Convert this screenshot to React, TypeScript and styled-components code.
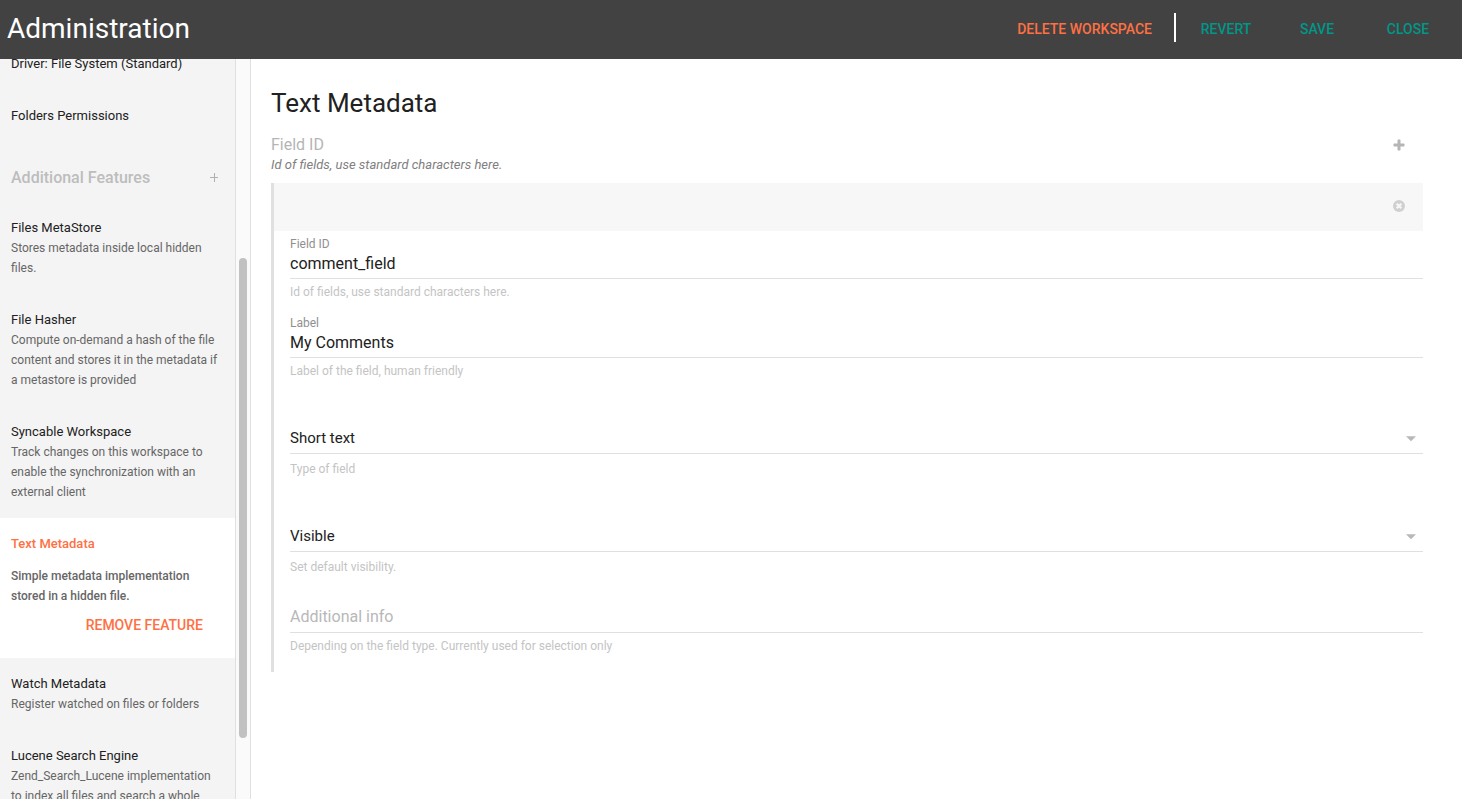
import React, { useId, useState } from "react";
import styled, { createGlobalStyle } from "styled-components";

const GlobalStyle = createGlobalStyle`
  * { box-sizing: border-box; }
  body {
    margin: 0;
    background: #fff;
    color: #212121;
    font-family: Roboto, "Liberation Sans", sans-serif;
  }
  h1, h2, h3, p, ul { margin: 0; padding: 0; font-weight: 400; }
  button, input, select { font-family: inherit; }
`;

const Page = styled.div`
  display: flex;
  flex-direction: column;
  height: 100vh;
  overflow: hidden;
`;

const TopBar = styled.header`
  position: relative;
  z-index: 1;
  display: flex;
  flex: none;
  align-items: center;
  justify-content: space-between;
  height: 59px;
  padding: 0 10px 4px 7px;
  background: #424242;
`;

const AppTitle = styled.h1`
  padding-top: 3px;
  color: #fff;
  font-size: 28px;
  line-height: 40px;
`;

const Actions = styled.div`
  display: flex;
  align-items: center;
`;

const FlatButton = styled.button<{ $accent?: boolean }>`
  min-width: 88px;
  height: 36px;
  padding: 2px 16px 0;
  border: 0;
  background: transparent;
  color: ${(p) => (p.$accent ? "#ff7043" : "#009688")};
  font-size: 14px;
  font-weight: 500;
  text-transform: uppercase;
  white-space: nowrap;
  cursor: pointer;
`;

const BarButton = styled(FlatButton)`
  margin-left: 3px;
`;

const Divider = styled.span`
  width: 2px;
  height: 29px;
  margin: 0 3px 0 6px;
  background: #fff;
`;

const Body = styled.div`
  display: flex;
  flex: 1;
  min-height: 0;
`;

const Sidebar = styled.aside`
  display: flex;
  flex: none;
  width: 251px;
  overflow: hidden;
  background: #f4f4f4;
`;

const ItemList = styled.ul`
  flex: 1;
  margin-top: -21px;
  list-style: none;
`;

const Item = styled.li<{ $selected?: boolean }>`
  padding: 16px 16px 16px 11px;
  background: ${(p) => (p.$selected ? "#fff" : "transparent")};
`;

const ItemTitle = styled.h3<{ $selected?: boolean }>`
  margin-bottom: ${(p) => (p.$selected ? "12px" : "0")};
  color: ${(p) => (p.$selected ? "#ff7043" : "#212121")};
  font-size: 13px;
  font-weight: ${(p) => (p.$selected ? 500 : 400)};
  line-height: 20px;
`;

const ItemText = styled.p<{ $selected?: boolean }>`
  color: #666;
  font-size: 12px;
  font-weight: ${(p) => (p.$selected ? 500 : 400)};
  line-height: 20px;
`;

const ItemActions = styled.div`
  display: flex;
  justify-content: flex-end;
`;

const SectionHead = styled.li`
  display: flex;
  align-items: center;
  justify-content: space-between;
  padding: 26px 16px 14px 11px;
`;

const SectionTitle = styled.h2`
  color: #bdbdbd;
  font-size: 16px;
  font-weight: 500;
  line-height: 20px;
`;

const IconButton = styled.button`
  display: flex;
  padding: 0;
  border: 0;
  background: transparent;
  cursor: pointer;
`;

const Track = styled.div`
  display: grid;
  grid-template-rows: 199fr 480fr 61fr;
  flex: none;
  width: 16px;
  padding: 0 3px;
  border: solid #e0e0e0;
  border-width: 0 1px 0 1px;
  background: #fafafa;
`;

const Thumb = styled.div`
  grid-row: 2;
  width: 8px;
  border-radius: 4px;
  background: #c1c1c1;
`;

const Main = styled.main`
  flex: 1;
  min-width: 0;
  padding: 26px 39px 20px 20px;
`;

const PaneTitle = styled.h2`
  font-size: 26px;
  line-height: 36px;
`;

const GroupHead = styled.div`
  display: flex;
  align-items: flex-start;
  justify-content: space-between;
  padding: 14px 18px 8px 0;
`;

const GroupName = styled.h3`
  color: #b5b5b5;
  font-size: 16px;
  line-height: 20px;
`;

const GroupHint = styled.p`
  color: #808080;
  font-size: 13px;
  font-style: italic;
  line-height: 20px;
`;

const AddButton = styled(IconButton)`
  margin-top: 4px;
`;

const Group = styled.section`
  padding-bottom: 8px;
  border-left: 3px solid #e0e0e0;
`;

const GroupBar = styled.div`
  display: flex;
  align-items: center;
  justify-content: flex-end;
  height: 48px;
  padding: 0 18px 2px 0;
  background: #f7f7f7;
`;

const Field = styled.div`
  padding: 4px 0 8px 16px;
`;

const FieldLabel = styled.label`
  display: block;
  height: 16px;
  color: #909090;
  font-size: 12px;
  line-height: 18px;
`;

const TextInput = styled.input`
  display: block;
  width: 100%;
  height: 28px;
  padding: 0 0 3px;
  border: 0;
  border-bottom: 1px solid #e0e0e0;
  outline: 0;
  background: transparent;
  color: #212121;
  font-size: 16px;
  &::placeholder { color: #b8b8b8; opacity: 1; }
  &:placeholder-shown { padding-bottom: 5px; }
`;

const Helper = styled.p`
  margin-top: 3px;
  color: #c4c4c4;
  font-size: 12px;
  line-height: 20px;
`;

const SelectField = styled.div`
  padding: 37px 0 8px 16px;
`;

const SelectBox = styled.div`
  display: flex;
  align-items: center;
  position: relative;
`;

const Select = styled.select`
  width: 100%;
  height: 28px;
  padding: 0 0 3px;
  appearance: none;
  border: 0;
  border-bottom: 1px solid #e0e0e0;
  border-radius: 0;
  outline: 0;
  background: transparent;
  color: #212121;
  font-size: 15px;
`;

const Arrow = styled.svg`
  position: absolute;
  right: 7px;
  top: 10px;
  pointer-events: none;
`;

const SelectHelper = styled(Helper)`
  margin-top: 5px;
`;

type Feature = { title: string; text?: string; selected?: boolean };

const settings: Feature[] = [
  { title: "Driver: File System (Standard)" },
  { title: "Folders Permissions" },
];

const features: Feature[] = [
  { title: "Files MetaStore", text: "Stores metadata inside local hidden files." },
  {
    title: "File Hasher",
    text: "Compute on-demand a hash of the file content and stores it in the metadata if a metastore is provided",
  },
  {
    title: "Syncable Workspace",
    text: "Track changes on this workspace to enable the synchronization with an external client",
  },
  {
    title: "Text Metadata",
    text: "Simple metadata implementation stored in a hidden file.",
    selected: true,
  },
  { title: "Watch Metadata", text: "Register watched on files or folders" },
  {
    title: "Lucene Search Engine",
    text: "Zend_Search_Lucene implementation to index all files and search a whole",
  },
];

function FeatureItem({ title, text, selected }: Feature) {
  return (
    <Item $selected={selected}>
      <ItemTitle $selected={selected}>{title}</ItemTitle>
      {text && <ItemText $selected={selected}>{text}</ItemText>}
      {selected && (
        <ItemActions>
          <FlatButton $accent>Remove Feature</FlatButton>
        </ItemActions>
      )}
    </Item>
  );
}

type TextFieldProps = { label?: string; placeholder?: string; initial?: string; helper: string };

function TextField({ label, placeholder, initial = "", helper }: TextFieldProps) {
  const id = useId();
  const [value, setValue] = useState(initial);
  return (
    <Field>
      <FieldLabel htmlFor={id}>{label}</FieldLabel>
      <TextInput
        id={id}
        value={value}
        placeholder={placeholder}
        aria-label={label ?? placeholder}
        onChange={(e) => setValue(e.target.value)}
      />
      <Helper>{helper}</Helper>
    </Field>
  );
}

function SelectInput({ options, helper }: { options: string[]; helper: string }) {
  return (
    <SelectField>
      <SelectBox>
        <Select aria-label={helper}>
          {options.map((o) => (
            <option key={o}>{o}</option>
          ))}
        </Select>
        <Arrow width="10" height="6" viewBox="0 0 10 6">
          <path d="M0 0.3h10l-5 5z" fill="#b8b8b8" />
        </Arrow>
      </SelectBox>
      <SelectHelper>{helper}</SelectHelper>
    </SelectField>
  );
}

export default function App() {
  return (
    <Page>
      <GlobalStyle />
      <TopBar>
        <AppTitle>Administration</AppTitle>
        <Actions>
          <FlatButton $accent>Delete Workspace</FlatButton>
          <Divider />
          <BarButton>Revert</BarButton>
          <BarButton>Save</BarButton>
          <BarButton>Close</BarButton>
        </Actions>
      </TopBar>
      <Body>
        <Sidebar>
          <ItemList>
            {settings.map((s) => (
              <FeatureItem key={s.title} {...s} />
            ))}
            <SectionHead>
              <SectionTitle>Additional Features</SectionTitle>
              <IconButton aria-label="Add feature">
                <svg width="10" height="10" viewBox="0 0 10 10">
                  <path d="M1 4.5h8M5.5 0v9" stroke="#b0b0b0" strokeWidth="1" />
                </svg>
              </IconButton>
            </SectionHead>
            {features.map((f) => (
              <FeatureItem key={f.title} {...f} />
            ))}
          </ItemList>
          <Track>
            <Thumb />
          </Track>
        </Sidebar>
        <Main>
          <PaneTitle>Text Metadata</PaneTitle>
          <GroupHead>
            <div>
              <GroupName>Field ID</GroupName>
              <GroupHint>Id of fields, use standard characters here.</GroupHint>
            </div>
            <AddButton aria-label="Add field">
              <svg width="12" height="12" viewBox="0 0 12 12">
                <path
                  d="M5.2 0.5h1.6q.7 0 .7.7v3.3h3.3q.7 0 .7.7v1.6q0 .7-.7.7H7.5v3.3q0 .7-.7.7H5.2q-.7 0-.7-.7V7.5H1.2q-.7 0-.7-.7V5.2q0-.7.7-.7h3.3V1.2q0-.7.7-.7z"
                  fill="#b5b5b5"
                />
              </svg>
            </AddButton>
          </GroupHead>
          <Group>
            <GroupBar>
              <IconButton aria-label="Remove field">
                <svg width="12" height="12" viewBox="0 0 12 12">
                  <circle cx="6" cy="6" r="6" fill="#d0d0d0" />
                  <path d="M3.7 3.7l4.6 4.6M8.3 3.7L3.7 8.3" stroke="#f7f7f7" strokeWidth="2.2" />
                </svg>
              </IconButton>
            </GroupBar>
            <TextField
              label="Field ID"
              initial="comment_field"
              helper="Id of fields, use standard characters here."
            />
            <TextField label="Label" initial="My Comments" helper="Label of the field, human friendly" />
            <SelectInput options={["Short text", "Long text"]} helper="Type of field" />
            <SelectInput options={["Visible", "Hidden"]} helper="Set default visibility." />
            <TextField
              placeholder="Additional info"
              helper="Depending on the field type. Currently used for selection only"
            />
          </Group>
        </Main>
      </Body>
    </Page>
  );
}
